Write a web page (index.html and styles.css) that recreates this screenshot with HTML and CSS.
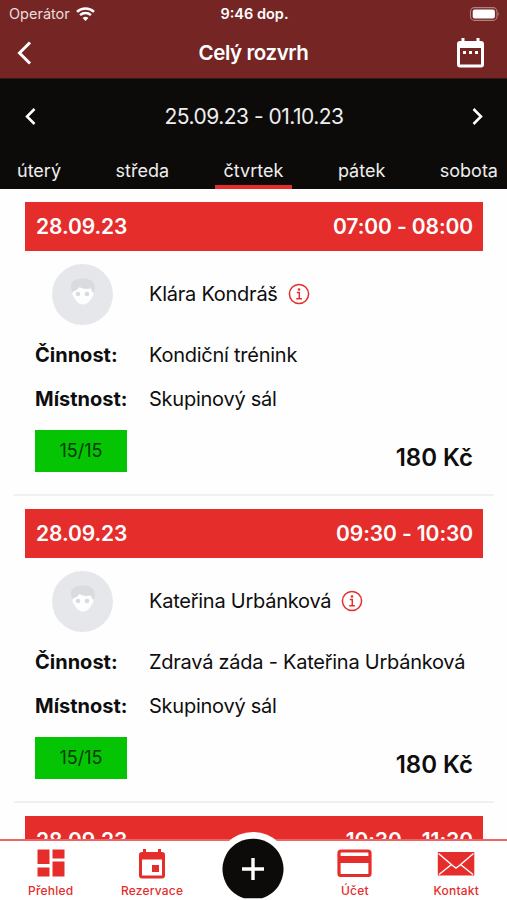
FILE: index.html
```
<!DOCTYPE html>
<html lang="cs">
  <head>
    <meta charset="UTF-8" />
    <meta name="viewport" content="width=device-width, initial-scale=1.0" />
    <title>Celý rozvrh</title>
    <link rel="stylesheet" href="styles.css">
  </head>

  <body>
    <svg class="defs" width="0" height="0">
      <symbol id="face" viewBox="0 0 61 61">
        <path fill="#d8dcdf" d="M20 28c-2-7-1-10 3-12 5-2 11-2 15 0 5 2 6 6 4 12z"/>
        <path fill="#fdfefe" d="M22 27c3-1 4-2 5.500-4 4 2.500 8 2 11.500 1.500l1 3c2 1 2 4 0 5.500-1.500 4-5 7.500-9 7.500s-7.500-3.500-9-7.500c-2-1.500-2-5 0-6z"/>
        <circle fill="#d8dcdf" cx="26" cy="30" r="2.300"/>
        <circle fill="#d8dcdf" cx="35" cy="30" r="2.300"/>
      </symbol>
      <symbol id="info" viewBox="0 0 22 22">
        <circle cx="11" cy="11" r="9.600" fill="none" stroke="#e52d2b" stroke-width="1.500"/>
        <circle cx="11" cy="6.500" r="1.300" fill="#e52d2b"/>
        <path d="M8.800 9.600h2.500v6M8.300 15.800h5.600" fill="none" stroke="#e52d2b" stroke-width="1.500"/>
      </symbol>
    </svg>

    <div class="status">
      <div class="carrier">
        <span>Operátor</span>
        <svg width="19" height="14" viewBox="0 0 19 14" fill="none" stroke="#fff" stroke-width="2.500">
          <path d="M1 4.800c4.800-4.400 12.200-4.400 17 0"/>
          <path d="M4.100 8.200c3-2.800 7.800-2.800 10.800 0"/>
          <path d="M6.600 11q2.900-2.500 5.800 0L9.500 13.900z" fill="#fff" stroke="none"/>
        </svg>
      </div>
      <div class="time">9:46 dop.</div>
      <svg class="battery" width="31" height="14" viewBox="0 0 31 14">
        <rect x="1.500" y=".6" width="26.500" height="12.800" rx="4" fill="none" stroke="#b48180" stroke-width="1.100"/>
        <rect x="3.700" y="2.600" width="22.200" height="8.800" rx="2" fill="#fff"/>
        <path d="M29 5q1.800 2 0 4z" fill="#b48180"/>
      </svg>
    </div>

    <div class="header">
      <svg width="15" height="24" viewBox="0 0 15 24" fill="none" stroke="#fff" stroke-width="3">
        <path d="M13 1.500 2.500 12 13 22.500"/>
      </svg>
      <h1>Celý rozvrh</h1>
      <svg width="27" height="30" viewBox="0 0 27 30" fill="#fff">
        <path fill-rule="evenodd" d="M4.500 0h3v3h12V0h3v3H24q3 0 3 3v20.500q0 3-3 3H3q-3 0-3-3V6q0-3 3-3h1.500zM3 10v16.500h21V10z"/>
        <path d="M6 13h3v3H6zM12 13h3v3h-3zM18 13h3v3h-3z"/>
      </svg>
    </div>

    <div class="week">
      <div class="range">
        <svg width="11" height="17" viewBox="0 0 11 17"><path d="M9.500 1 2 8.500 9.500 16"/></svg>
        <span>25.09.23 - 01.10.23</span>
        <svg width="11" height="17" viewBox="0 0 11 17"><path d="M1.500 1 9 8.500 1.500 16"/></svg>
      </div>
      <div class="days">
        <div class="day">úterý</div>
        <div class="day">středa</div>
        <div class="day active">čtvrtek</div>
        <div class="day">pátek</div>
        <div class="day">sobota</div>
      </div>
    </div>

    <div class="list">
      <div class="lesson">
        <div class="when"><span>28.09.23</span><span>07:00 - 08:00</span></div>
        <div class="row trainer">
          <svg class="avatar"><use href="#face"/></svg>
          <span>Klára Kondráš</span>
          <svg class="info"><use href="#info"/></svg>
        </div>
        <div class="row"><b>Činnost:</b><span>Kondiční trénink</span></div>
        <div class="row"><b>Místnost:</b><span>Skupinový sál</span></div>
        <div class="bottom">
          <div class="places">15/15</div>
          <div class="price">180 Kč</div>
        </div>
      </div>

      <div class="lesson">
        <div class="when"><span>28.09.23</span><span>09:30 - 10:30</span></div>
        <div class="row trainer">
          <svg class="avatar"><use href="#face"/></svg>
          <span>Kateřina Urbánková</span>
          <svg class="info"><use href="#info"/></svg>
        </div>
        <div class="row"><b>Činnost:</b><span>Zdravá záda - Kateřina Urbánková</span></div>
        <div class="row"><b>Místnost:</b><span>Skupinový sál</span></div>
        <div class="bottom">
          <div class="places">15/15</div>
          <div class="price">180 Kč</div>
        </div>
      </div>

      <div class="lesson">
        <div class="when"><span>28.09.23</span><span>10:30 - 11:30</span></div>
      </div>
    </div>

    <div class="tabbar">
      <div class="tab">
        <svg width="28" height="28" viewBox="0 0 28 28" fill="#e52d2b">
          <path d="M.5.500h12v14.500H.5zM15.500.500h12v9h-12zM.5 18.500h12v9H.5zM15.500 12.500h12v15h-12z"/>
        </svg>
        <span>Přehled</span>
      </div>
      <div class="tab">
        <svg width="28" height="30" viewBox="0 0 28 30" fill="#e52d2b">
          <path fill-rule="evenodd" d="M5 0h3v3h12V0h3v3h1q3 0 3 3v20.500q0 3-3 3H4q-3 0-3-3V6q0-3 3-3h1zM4 10.500v16h20v-16z"/>
          <path d="M14 16h7v7h-7z"/>
        </svg>
        <span>Rezervace</span>
      </div>
      <div class="tab plus">
        <svg width="74" height="68" viewBox="0 0 74 68">
          <circle cx="37" cy="37" r="37" fill="#fff"/>
          <path fill="#0d0b0a" d="M28 66.300A30.500 30.500 0 1 1 46 66.300z"/>
          <path d="M26 37h22M37 26v22" stroke="#fff" stroke-width="3.400"/>
        </svg>
      </div>
      <div class="tab">
        <svg width="35" height="28" viewBox="0 0 35 28">
          <rect x="2" y="2" width="31" height="24.500" rx="2" fill="none" stroke="#e52d2b" stroke-width="3.200"/>
          <path fill="#e52d2b" d="M2 7h31v7H2z"/>
        </svg>
        <span>Účet</span>
      </div>
      <div class="tab mail">
        <svg width="38" height="24" viewBox="0 0 38 24">
          <path fill="#e52d2b" d="M.8 0h36.500v23.500H.8z"/>
          <path d="M1.500 1.500 15.500 13.500 19 16 22.500 13.500 36.500 1.500M2 22.500 14.500 12.500M36 22.500 23.500 12.500" fill="none" stroke="#fff" stroke-width="1.500"/>
        </svg>
        <span>Kontakt</span>
      </div>
    </div>
  </body>
</html>
```
FILE: styles.css
```
* {
  box-sizing: border-box;
}

body {
  margin: 0;
  height: 900px;
  display: flex;
  flex-direction: column;
  overflow: hidden;
  background: #fefefe;
  color: #0e0e0e;
  font-family: Inter, "Liberation Sans", sans-serif;
  font-size: 20px;
}

svg {
  display: block;
  flex: none;
}

.defs {
  position: absolute;
}

.status {
  height: 27px;
  padding: 0 7px 0 9px;
  display: grid;
  grid-template-columns: 1fr auto 1fr;
  align-items: center;
  background: #752624;
  color: #fff;
  font-size: 14.5px;
}

.carrier {
  display: flex;
  gap: 6px;
  align-items: center;
  color: #eadcdc;
}

.time {
  font-weight: 600;
}

.battery {
  justify-self: end;
}

.header {
  height: 52px;
  padding: 0 23px 0 17px;
  display: flex;
  align-items: center;
  justify-content: space-between;
  background: #752624;
  border-bottom: 1px solid #3a1513;
  color: #fff;
}

h1 {
  margin: 0;
  padding-left: 18px;
  font-size: 20.5px;
  font-weight: 600;
  letter-spacing: -0.4px;
}

.week {
  height: 110px;
  background: #0d0b0a;
  color: #eee;
}

.range {
  height: 75px;
  padding: 0 24px 0 25px;
  display: flex;
  align-items: center;
  justify-content: space-between;
  font-size: 21px;
  letter-spacing: -0.5px;
}

.range path {
  fill: none;
  stroke: #fff;
  stroke-width: 2.5;
}

.days {
  height: 35px;
  padding: 0 0 0 8px;
  display: flex;
  justify-content: space-between;
  font-size: 18px;
}

.day {
  padding: 6px 9px 0;
}

.active {
  border-bottom: 4px solid #e52d2b;
}

.list {
  flex: 1;
  min-height: 0;
  padding: 13px 13px 0 14px;
  overflow: hidden;
}

.lesson {
  height: 307px;
  padding: 0 11px;
}

.lesson:not(:last-child) {
  background: linear-gradient(#f0f0f0, #f0f0f0) 0 292px / 100% 2px no-repeat;
}

.when {
  height: 49px;
  padding: 0 10px 0 11px;
  display: flex;
  align-items: center;
  justify-content: space-between;
  background: #e52d2b;
  color: #fff;
  font-size: 21px;
  font-weight: 600;
  letter-spacing: -0.1px;
}

.row {
  height: 44px;
  padding-left: 10px;
  display: flex;
  align-items: center;
  white-space: nowrap;
}

.row b {
  width: 114px;
}

.row span {
  letter-spacing: -0.25px;
}

.trainer {
  height: 82px;
  padding: 4px 0 0 27px;
}

.avatar {
  width: 61px;
  height: 61px;
  margin-right: 36px;
  border-radius: 50%;
  background: #e5e7ea;
}

.info {
  width: 22px;
  height: 22px;
  margin-left: 10px;
}

.bottom {
  padding: 9px 10px 0;
  display: flex;
  justify-content: space-between;
}

.places {
  width: 92px;
  height: 42px;
  line-height: 42px;
  text-align: center;
  background: #04c404;
  color: #063806;
  font-size: 18px;
}

.price {
  padding-top: 13px;
  font-size: 24px;
  font-weight: 600;
}

.tabbar {
  height: 61px;
  display: grid;
  grid-template-columns: repeat(5, 1fr);
  background: #fff;
  border-top: 2px solid #ea6765;
  color: #e52d2b;
  font-size: 12px;
  font-weight: 500;
  letter-spacing: 0.2px;
}

.tab {
  position: relative;
  display: flex;
  flex-direction: column;
  align-items: center;
  justify-content: space-between;
  padding: 8px 0 2px;
}

.mail {
  padding-top: 11px;
}

/* the round button sticks out over the list */
.plus svg {
  position: absolute;
  top: -9px;
}
```
